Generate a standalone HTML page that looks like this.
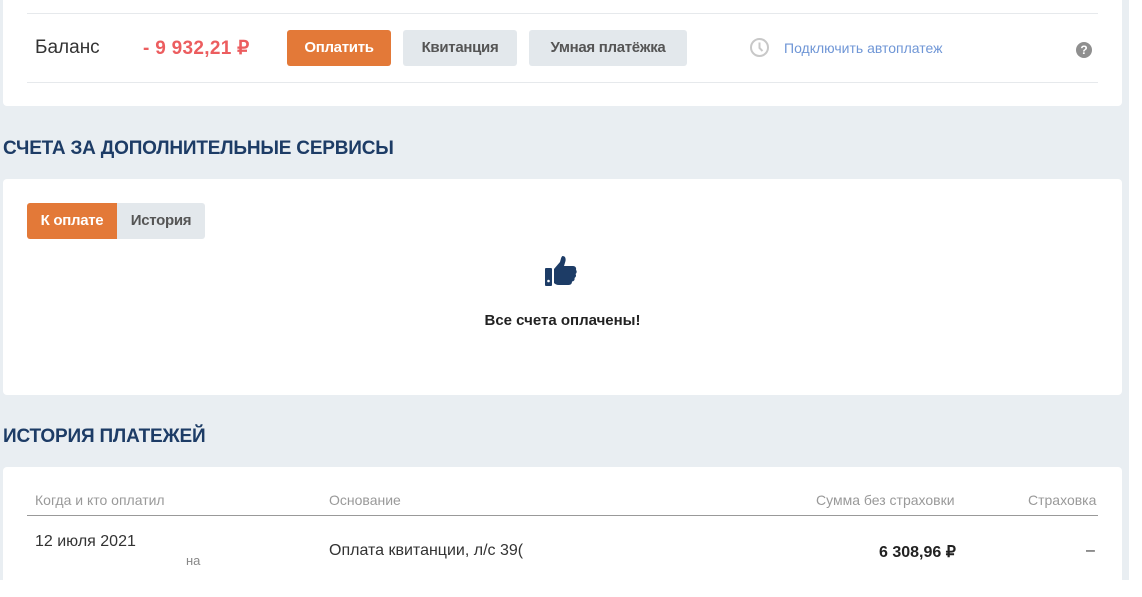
<!DOCTYPE html>
<html><head><meta charset="utf-8"><style>
*{margin:0;padding:0;box-sizing:border-box}
body{width:1142px;height:593px;background:#fff;font-family:"Liberation Sans","Noto Sans CJK SC",sans-serif;position:relative;overflow:hidden}
.bg{position:absolute;left:0;top:0;width:1129px;height:580px;background:#e9eef2}
.card{position:absolute;left:3px;width:1119px;background:#fff;border-radius:4px}
.abs{position:absolute;white-space:nowrap}
.btn{position:absolute;height:36px;border-radius:3px;font-weight:bold;font-size:15px;line-height:36px;text-align:center;letter-spacing:-0.3px}
.h{position:absolute;left:3px;font-size:19px;font-weight:bold;color:#1d3c66;letter-spacing:-0.2px}
</style></head><body>
<div class="bg"></div>
<div class="card" style="top:-4px;height:110px"></div>
<div class="abs" style="left:27px;top:13px;width:1071px;height:1px;background:#e6e9ec"></div>
<div class="abs" style="left:27px;top:82px;width:1071px;height:1px;background:#e6e9ec"></div>
<div class="abs" style="left:35px;top:37px;font-size:19px;color:#333">Баланс</div>
<div class="abs" style="left:143px;top:37px;font-size:19px;font-weight:bold;color:#ec5d5f;letter-spacing:0.3px">- 9 932,21 ₽</div>
<div class="btn" style="left:287px;top:30px;width:104px;background:#e37938;color:#fff">Оплатить</div>
<div class="btn" style="left:403px;top:30px;width:114px;background:#e3e8ec;color:#555">Квитанция</div>
<div class="btn" style="left:529px;top:30px;width:158px;background:#e3e8ec;color:#555">Умная платёжка</div>
<svg class="abs" style="left:749px;top:37px" width="21" height="21" viewBox="0 0 21 21"><circle cx="10.5" cy="10.5" r="8.5" fill="none" stroke="#c8c8c8" stroke-width="2"/><path d="M10.5 5.5V11l3 3" fill="none" stroke="#c8c8c8" stroke-width="2"/></svg>
<div class="abs" style="left:784px;top:40px;font-size:14px;color:#6f96d6">Подключить автоплатеж</div>
<div class="abs" style="left:1076px;top:42px;width:16px;height:16px;border-radius:50%;background:#8f8f8f;color:#fff;font-size:12px;font-weight:bold;text-align:center;line-height:16px">?</div>

<div class="h" style="top:138px">СЧЕТА ЗА ДОПОЛНИТЕЛЬНЫЕ СЕРВИСЫ</div>
<div class="card" style="top:179px;height:216px"></div>
<div class="btn" style="left:27px;top:203px;width:90px;background:#e37938;color:#fff;border-radius:3px 0 0 3px">К оплате</div>
<div class="btn" style="left:117px;top:203px;width:88px;background:#e3e8ec;color:#555;border-radius:0 3px 3px 0">История</div>
<svg class="abs" style="left:544px;top:255px" width="34" height="32" viewBox="0 0 34 32"><rect x="1" y="13" width="7" height="18" rx="1" fill="#1d3c66"/><circle cx="4.5" cy="26" r="1.3" fill="#fff"/><path d="M10 14 L16 7 C17 4 17 2 18.5 1 C21 1 22 3 21.5 6 L20 11 L29 11 C31.5 11 32.5 13 32 15 C33 16 33 18 31.5 19 C32.5 20.5 32 22 30.5 23 C31 24.5 30 26.5 28 26.5 C28 28.5 27 30 24.5 30 L15 30 C12.5 30 11 29 10 28 Z" fill="#1d3c66"/></svg>
<div class="abs" style="left:0;width:1125px;text-align:center;top:312px;font-size:15px;font-weight:bold;color:#222">Все счета оплачены!</div>

<div class="h" style="top:426px">ИСТОРИЯ ПЛАТЕЖЕЙ</div>
<div class="card" style="top:467px;height:130px;border-radius:4px 4px 0 0"></div>
<div class="abs" style="left:35px;top:492px;font-size:14px;color:#999">Когда и кто оплатил</div>
<div class="abs" style="left:329px;top:492px;font-size:14px;color:#999">Основание</div>
<div class="abs" style="left:816px;top:492px;font-size:14px;color:#999">Сумма без страховки</div>
<div class="abs" style="left:1028px;top:492px;font-size:14px;color:#999">Страховка</div>
<div class="abs" style="left:27px;top:515px;width:1071px;height:1px;background:#999"></div>
<div class="abs" style="left:35px;top:533px;font-size:16px;color:#333">12 июля 2021</div>
<div class="abs" style="left:186px;top:553px;font-size:13px;color:#888">на</div>
<div class="abs" style="left:329px;top:542px;font-size:16px;color:#333">Оплата квитанции, л/с 39(</div>
<div class="abs" style="left:879px;top:542px;font-size:16px;font-weight:bold;color:#222">6 308,96 ₽</div>
<div class="abs" style="left:1086px;top:542px;font-size:16px;color:#333">–</div>
<div class="abs" style="left:0;top:580px;width:1142px;height:13px;background:#fff"></div>
</body></html>
